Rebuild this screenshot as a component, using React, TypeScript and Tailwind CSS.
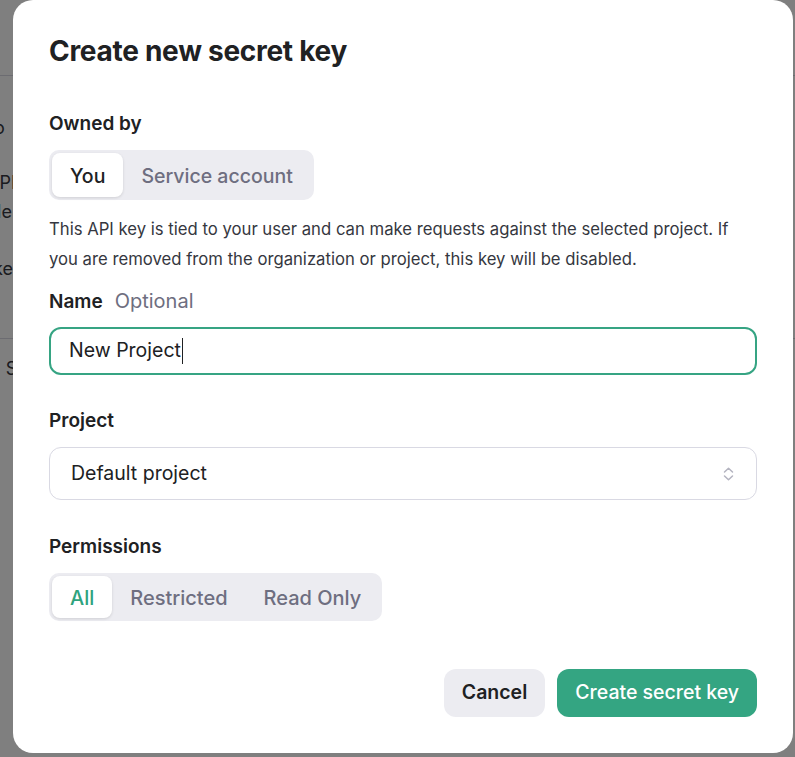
import React from 'react';

// Segmented control
const Segment = ({ options, active, activeClass }: { options: string[]; active: number; activeClass: string }) => (
  <div className="flex h-[48px] w-max rounded-[10px] bg-[#ececf1] p-[3px]">
    {options.map((opt, i) => (
      <button
        key={opt}
        className={`rounded-[8px] px-[18px] pt-[2px] text-[20px] font-medium ${
          i === active ? `bg-white shadow-[0_1px_3px_rgba(0,0,0,0.12)] ${activeClass}` : 'text-[#6e6e80]'
        }`}
      >
        {opt}
      </button>
    ))}
  </div>
);

const UpDown = () => (
  <svg width="11" height="14" viewBox="0 0 11 14" fill="none" stroke="#b4b4c0" strokeWidth="1.5" strokeLinecap="round" strokeLinejoin="round">
    <path d="M1.5 5 5.5 1.2 9.5 5" />
    <path d="M1.5 9 5.5 12.8 9.5 9" />
  </svg>
);

const App: React.FC = () => {
  return (
    <div
      className="relative h-[757px] w-[795px] overflow-hidden bg-white text-[#202123]"
      style={{ fontFamily: 'Inter, "Noto Sans", sans-serif' }}
    >
      {/* Page behind the dialog */}
      <div className="flex flex-col text-[18px] leading-[24px] text-[#353740]">
        <div className="h-[76px] border-b border-[#d9d9e3]" />
        <div className="ml-[-24px] mt-[40px] whitespace-nowrap">Pro</div>
        <div className="ml-[-13px] mt-[31px] whitespace-nowrap">API</div>
        <div className="ml-[-14px] mt-[5px] whitespace-nowrap">ble</div>
        <div className="ml-[-17px] mt-[33px] whitespace-nowrap">ake</div>
        <div className="mt-[57px] border-b border-[#d9d9e3]" />
        <div className="ml-[-10px] mt-[18px] whitespace-nowrap">n S</div>
      </div>

      {/* Dim overlay */}
      <div className="absolute inset-0 bg-black/50" />

      {/* Dialog */}
      <div className="absolute left-[13px] top-0 flex w-[780px] flex-col rounded-[20px] bg-white px-[36px] pb-[36px] pt-[33px]">
        <h2 className="text-[28px] font-bold leading-[36px] tracking-[-0.01em]">Create new secret key</h2>

        <div className="mt-[43px] text-[19px] font-semibold leading-[24px]">Owned by</div>
        <div className="mt-[14px]">
          <div className="flex h-[50px] w-max rounded-[10px] bg-[#ececf1] p-[3px]">
            <button className="rounded-[8px] bg-white px-[18px] pt-[3px] text-[19.5px] font-medium text-[#202123] shadow-[0_1px_3px_rgba(0,0,0,0.12)]">
              You
            </button>
            <button className="px-[18px] pt-[3px] text-[19.5px] font-medium text-[#6e6e80]">Service account</button>
          </div>
        </div>

        <p className="mt-[14px] text-[16.7px] leading-[30px] text-[#353740]">
          This API key is tied to your user and can make requests against the selected project. If
          <br />
          you are removed from the organization or project, this key will be disabled.
        </p>

        <div className="mt-[15px] flex items-baseline gap-[12px] leading-[24px]">
          <span className="text-[19px] font-semibold">Name</span>
          <span className="text-[20px] text-[#6e6e80]">Optional</span>
        </div>
        <div className="mt-[13px] flex h-[48px] items-center rounded-[12px] border-2 border-[#36a483] px-[18px] text-[19.5px]">
          <span>New Project</span>
          <span className="ml-px h-[26px] w-px bg-[#202123]" />
        </div>

        <div className="mt-[34px] text-[19px] font-semibold leading-[24px]">Project</div>
        <div className="mt-[14px] flex h-[53px] items-center justify-between rounded-[12px] border border-[#d9d9e3] pl-[21px] pr-[22px] text-[19.5px]">
          <span>Default project</span>
          <UpDown />
        </div>

        <div className="mt-[35px] text-[19px] font-semibold leading-[24px]">Permissions</div>
        <div className="mt-[14px]">
          <Segment options={['All', 'Restricted', 'Read Only']} active={0} activeClass="text-[#2ea37d]" />
        </div>

        <div className="mt-[48px] flex justify-end gap-[12px]">
          <button className="h-[48px] rounded-[12px] bg-[#ececf1] px-[18px] text-[19.5px] font-semibold text-[#202123]">
            Cancel
          </button>
          <button className="h-[48px] rounded-[12px] bg-[#34a582] px-[18px] text-[19.5px] font-medium text-white">
            Create secret key
          </button>
        </div>
      </div>
    </div>
  );
};

export default App;
